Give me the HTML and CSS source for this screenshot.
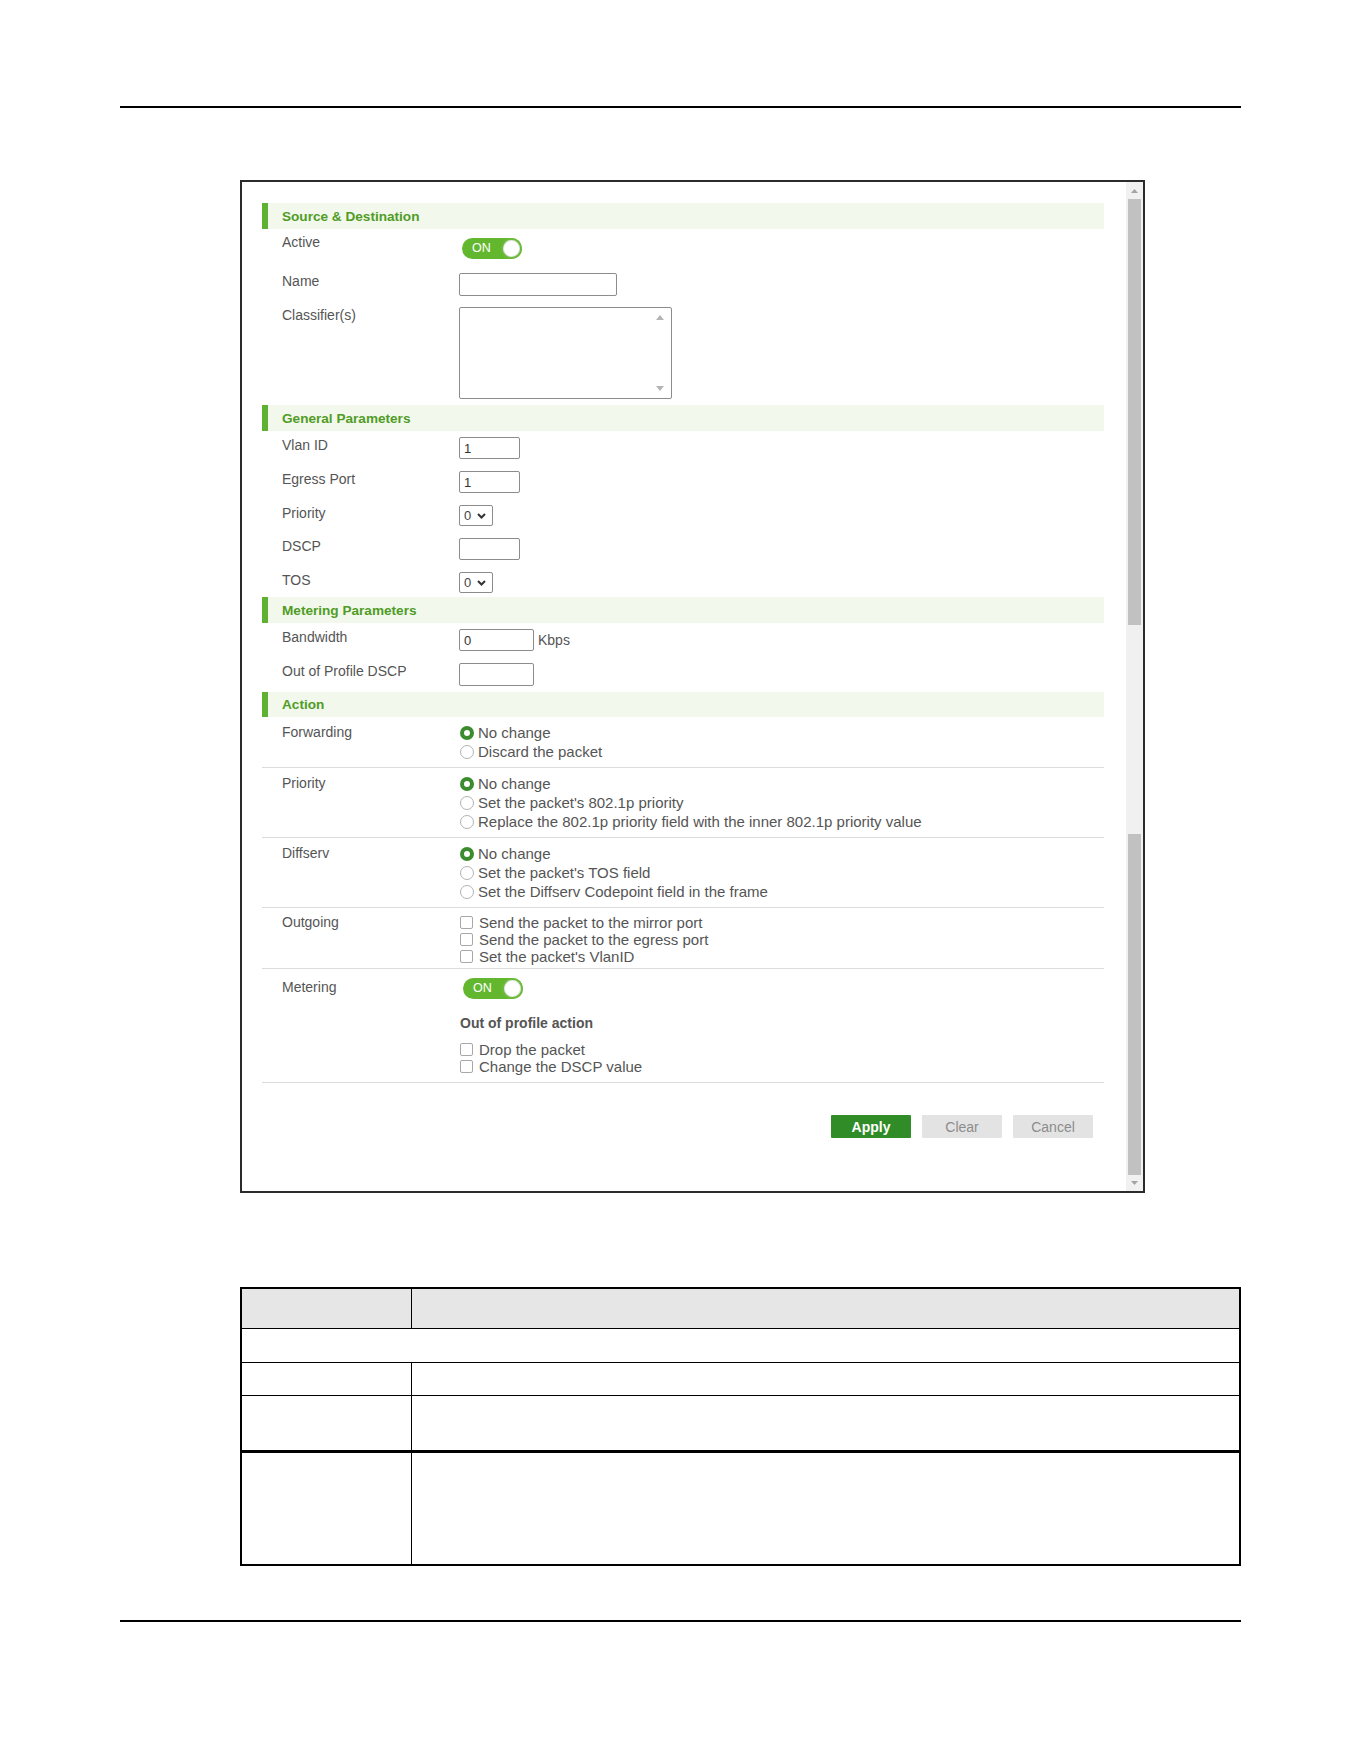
FILE: index.html
```html
<!DOCTYPE html>
<html lang="en">
<head>
<meta charset="utf-8">
<title>Queueing Rule</title>
<link rel="stylesheet" href="styles.css">
</head>
<body>
<div class="page">
  <div class="rule"></div>

  <div class="shot">
    <div class="panel">
      <section class="block block-src">
        <h3 class="sec-head">Source &amp; Destination</h3>
        <div class="field field-active">
          <span class="lbl">Active</span>
          <span class="toggle"><span class="toggle-text">ON</span><span class="knob"></span></span>
        </div>
        <div class="field field-name">
          <span class="lbl">Name</span>
          <input class="inp inp-name" type="text" value="">
        </div>
        <div class="field field-cls">
          <span class="lbl">Classifier(s)</span>
          <div class="listbox">
            <svg class="lb-arrow lb-up" width="8" height="5" viewBox="0 0 8 5"><path d="M0 5 L4 0 L8 5 Z" fill="#b4b4b4"/></svg>
            <svg class="lb-arrow lb-down" width="8" height="5" viewBox="0 0 8 5"><path d="M0 0 L4 5 L8 0 Z" fill="#b4b4b4"/></svg>
          </div>
        </div>
      </section>

      <section class="block block-gen">
        <h3 class="sec-head">General Parameters</h3>
        <div class="stack">
          <div class="field"><span class="lbl">Vlan ID</span><input class="inp inp-sm" type="text" value="1"></div>
          <div class="field"><span class="lbl">Egress Port</span><input class="inp inp-sm" type="text" value="1"></div>
          <div class="field"><span class="lbl">Priority</span>
            <span class="select"><span class="sel-val">0</span><svg class="chev" width="9" height="6" viewBox="0 0 9 6"><path d="M1 1 L4.5 4.5 L8 1" fill="none" stroke="#333" stroke-width="2"/></svg></span>
          </div>
          <div class="field"><span class="lbl">DSCP</span><input class="inp inp-sm" type="text" value=""></div>
          <div class="field"><span class="lbl">TOS</span>
            <span class="select"><span class="sel-val">0</span><svg class="chev" width="9" height="6" viewBox="0 0 9 6"><path d="M1 1 L4.5 4.5 L8 1" fill="none" stroke="#333" stroke-width="2"/></svg></span>
          </div>
        </div>
      </section>

      <section class="block block-met">
        <h3 class="sec-head">Metering Parameters</h3>
        <div class="stack">
          <div class="field"><span class="lbl">Bandwidth</span><span class="with-unit"><input class="inp inp-md" type="text" value="0"><span class="unit">Kbps</span></span></div>
          <div class="field"><span class="lbl">Out of Profile DSCP</span><input class="inp inp-md inp-tall" type="text" value=""></div>
        </div>
      </section>

      <section class="block block-act">
        <h3 class="sec-head">Action</h3>

        <div class="act-row">
          <span class="lbl">Forwarding</span>
          <div class="opts">
            <div class="opt"><span class="radio on"></span>No change</div>
            <div class="opt"><span class="radio"></span>Discard the packet</div>
          </div>
        </div>

        <div class="act-row">
          <span class="lbl">Priority</span>
          <div class="opts">
            <div class="opt"><span class="radio on"></span>No change</div>
            <div class="opt"><span class="radio"></span>Set the packet's 802.1p priority</div>
            <div class="opt"><span class="radio"></span>Replace the 802.1p priority field with the inner 802.1p priority value</div>
          </div>
        </div>

        <div class="act-row">
          <span class="lbl">Diffserv</span>
          <div class="opts">
            <div class="opt"><span class="radio on"></span>No change</div>
            <div class="opt"><span class="radio"></span>Set the packet's TOS field</div>
            <div class="opt"><span class="radio"></span>Set the Diffserv Codepoint field in the frame</div>
          </div>
        </div>

        <div class="act-row act-out">
          <span class="lbl">Outgoing</span>
          <div class="opts checks">
            <div class="opt"><span class="check"></span>Send the packet to the mirror port</div>
            <div class="opt"><span class="check"></span>Send the packet to the egress port</div>
            <div class="opt"><span class="check"></span>Set the packet's VlanID</div>
          </div>
        </div>

        <div class="act-row act-meter">
          <span class="lbl">Metering</span>
          <div class="opts">
            <span class="toggle"><span class="toggle-text">ON</span><span class="knob"></span></span>
            <div class="sub-head">Out of profile action</div>
            <div class="checks">
              <div class="opt"><span class="check"></span>Drop the packet</div>
              <div class="opt"><span class="check"></span>Change the DSCP value</div>
            </div>
          </div>
        </div>

        <div class="buttons">
          <button class="btn btn-apply" type="button">Apply</button>
          <button class="btn btn-gray" type="button">Clear</button>
          <button class="btn btn-gray" type="button">Cancel</button>
        </div>
      </section>
    </div>

    <div class="scrollbar">
      <div class="sb-btn"><svg width="7" height="4" viewBox="0 0 7 4"><path d="M0 4 L3.5 0 L7 4 Z" fill="#a3a3a3"/></svg></div>
      <div class="sb-part sb-upper"></div>
      <div class="sb-part sb-mid"></div>
      <div class="sb-part sb-lower"></div>
      <div class="sb-btn sb-btn-down"><svg width="7" height="4" viewBox="0 0 7 4"><path d="M0 0 L3.5 4 L7 0 Z" fill="#a3a3a3"/></svg></div>
    </div>
  </div>

  <table class="desc">
    <colgroup><col class="c1"><col class="c2"></colgroup>
    <tr class="r-head"><th></th><th></th></tr>
    <tr class="r-span"><td colspan="2"></td></tr>
    <tr class="r-3"><td></td><td></td></tr>
    <tr class="r-4"><td></td><td></td></tr>
    <tr class="r-5"><td></td><td></td></tr>
  </table>

  <div class="rule rule-bottom"></div>
</div>
</body>
</html>
```

FILE: styles.css
```css
* { box-sizing: border-box; }

html, body {
  margin: 0;
  padding: 0;
  background: #ffffff;
}

body {
  font-family: "Liberation Sans", Arial, sans-serif;
  color: #555555;
  font-size: 14px;
}

.page {
  width: 1361px;
  padding: 106px 0 120px 120px;
}

.rule {
  width: 1121px;
  height: 2px;
  background: #000000;
}

.rule-bottom {
  margin-top: 54px;
}

/* ---------- screenshot frame ---------- */
.shot {
  margin: 72px 0 0 120px;
  width: 905px;
  height: 1013px;
  border: 2px solid #2b2b2b;
  display: flex;
  background: #ffffff;
}

.panel {
  flex: 1;
  padding: 21px 22px 0 20px;
}

.sec-head {
  margin: 0;
  height: 26px;
  display: flex;
  align-items: center;
  border-left: 6px solid #5fb231;
  padding-left: 14px;
  background: #f3f8ec;
  color: #4f9c26;
  font-size: 13.6px;
  font-weight: bold;
}

.field {
  display: grid;
  grid-template-columns: 177px 1fr;
  align-items: start;
  padding-left: 20px;
}

.lbl {
  line-height: 16px;
  color: #555555;
  font-size: 14px;
}

/* section 1 */
.field-active { margin-top: 5px; }
.field-active .toggle { margin-top: 4px; }
.field-name { margin-top: 14px; }
.field-cls { margin-top: 11px; }
.block-src { padding-bottom: 6px; }

.stack {
  display: flex;
  flex-direction: column;
  gap: 12px;
  padding-top: 6px;
}

.block-gen { padding-bottom: 4px; }
.block-met { padding-bottom: 6px; }

/* toggle switch */
.toggle {
  position: relative;
  display: inline-flex;
  align-items: center;
  width: 60px;
  height: 21px;
  border-radius: 11px;
  background: #63b72e;
  margin-left: 3px;
}

.toggle-text {
  color: #ffffff;
  font-size: 12.5px;
  padding-left: 10px;
  line-height: 21px;
}

.knob {
  position: absolute;
  right: 0;
  top: 0;
  width: 21px;
  height: 21px;
  border-radius: 50%;
  background: #ffffff;
  border: 2px solid #6dbb3c;
  box-shadow: inset 0 0 0 1px #e6e6e6;
}

/* text inputs */
.inp {
  display: block;
  height: 22px;
  border: 1px solid #8c8c8c;
  border-radius: 2px;
  padding: 0 4px;
  font-family: "Liberation Sans", Arial, sans-serif;
  font-size: 13px;
  color: #333333;
  background: #ffffff;
  outline: none;
}

.inp-name { width: 158px; height: 23px; }
.inp-sm { width: 61px; }
.inp-md { width: 75px; }
.inp-tall { height: 23px; }

.with-unit {
  display: flex;
  align-items: center;
  gap: 4px;
}

.unit {
  font-size: 14px;
  color: #555555;
}

.listbox {
  position: relative;
  width: 213px;
  height: 92px;
  border: 1px solid #8c8c8c;
  border-radius: 2px;
}

.lb-arrow { position: absolute; right: 7px; }
.lb-up { top: 7px; }
.lb-down { bottom: 7px; }

.select {
  display: inline-flex;
  align-items: center;
  gap: 6px;
  width: 34px;
  height: 21px;
  border: 1px solid #8c8c8c;
  border-radius: 2px;
  padding-left: 4px;
  font-size: 13px;
  color: #444444;
}

/* action rows */
.block-act .sec-head { height: 25px; }

.act-row {
  display: grid;
  grid-template-columns: 178px 1fr;
  align-items: start;
  padding: 6px 0 6px 20px;
  border-bottom: 1px solid #dcdcdc;
}

.act-row .lbl { line-height: 19px; }

.opt {
  display: flex;
  align-items: center;
  height: 19px;
  font-size: 15px;
  color: #555555;
  white-space: nowrap;
}

.checks .opt { height: 17px; }

.act-out { padding-top: 6px; padding-bottom: 3px; }
.act-out .lbl { line-height: 17px; }

.radio {
  width: 14px;
  height: 14px;
  border-radius: 50%;
  border: 1px solid #b3b3b3;
  background: #ffffff;
  margin-right: 4px;
  flex: none;
}

.radio.on {
  border: 4px solid #3c8c2f;
}

.check {
  width: 13px;
  height: 13px;
  border: 1px solid #a8a8a8;
  border-radius: 2px;
  background: #ffffff;
  margin-right: 6px;
  flex: none;
}

.act-meter { padding-top: 9px; padding-bottom: 7px; }
.act-meter .toggle { margin-left: 3px; }

.sub-head {
  margin-top: 16px;
  line-height: 16px;
  font-weight: bold;
  font-size: 14px;
  color: #555555;
}

.act-meter .checks { margin-top: 10px; }

.buttons {
  display: flex;
  justify-content: flex-end;
  gap: 11px;
  margin-top: 32px;
  padding-right: 11px;
}

.btn {
  width: 80px;
  height: 23px;
  border: none;
  border-radius: 1px;
  font-family: "Liberation Sans", Arial, sans-serif;
  font-size: 14px;
  padding: 0;
}

.btn-apply {
  background: #2f8c26;
  color: #ffffff;
  font-weight: bold;
}

.btn-gray {
  background: #e3e3e3;
  color: #8c8c8c;
}

/* scrollbar */
.scrollbar {
  width: 17px;
  display: flex;
  flex-direction: column;
  background: #f1f1f1;
}

.sb-btn {
  height: 17px;
  display: flex;
  align-items: center;
  justify-content: center;
}

.sb-btn-down { height: 16px; }

.sb-part { margin: 0 2px; }
.sb-upper { height: 426px; background: #c1c1c1; }
.sb-mid { height: 209px; background: #f0f0f0; }
.sb-lower { height: 341px; background: #c1c1c1; }

/* description table */
.desc {
  margin: 94px 0 0 120px;
  width: 1001px;
  border-collapse: collapse;
  border: 2px solid #000000;
  table-layout: fixed;
}

.desc .c1 { width: 170px; }

.desc th,
.desc td {
  border: 1px solid #000000;
  padding: 0;
}

.r-head th { height: 40px; background: #e6e6e6; }
.r-span td { height: 34px; }
.r-3 td { height: 33px; }
.r-4 td { height: 56px; }
.r-5 td { height: 114px; border-top: 3px solid #000000; }
```
